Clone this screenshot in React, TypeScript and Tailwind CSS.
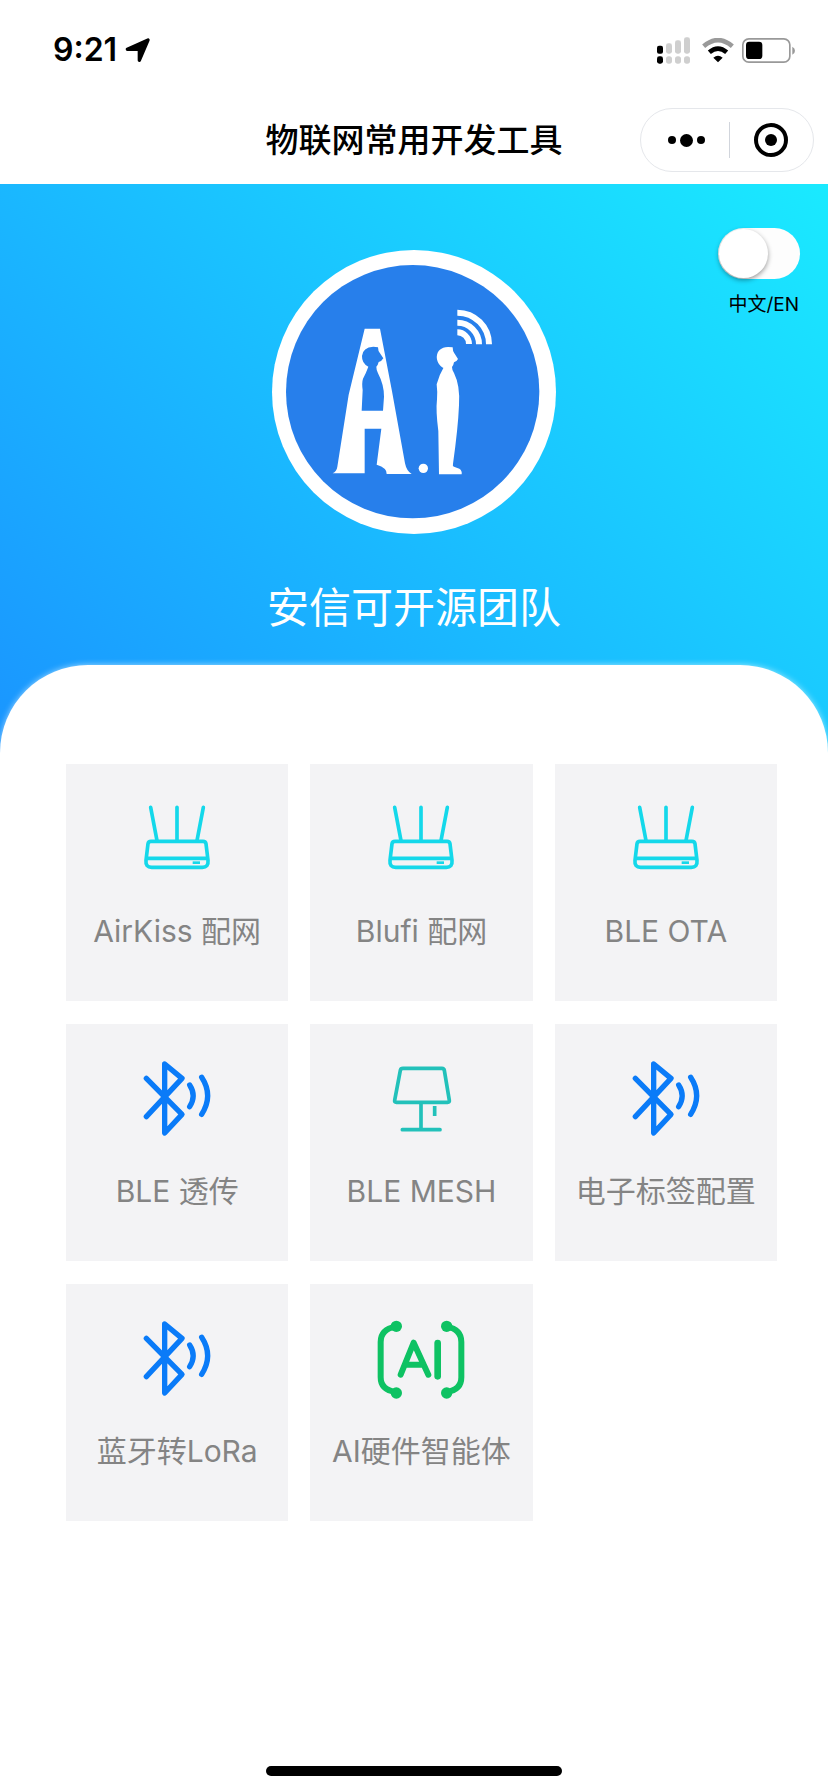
import React, { useState } from 'react'

const RouterIcon = () => (
    <svg viewBox="0 0 264 264" className="w-[88px] h-[88px]" fill="none" stroke="#14d8ea" strokeWidth="11" aria-hidden="true">
        <path d="M53 40l19 100M132 40v100M211 40l-19 100" strokeLinecap="round" />
        <path d="M54 142h156q8 0 9 7l6 50q2 21-17 21H56q-19 0-17-21l6-50q1-7 9-7z" />
        <path d="M41 193h183" />
        <path d="M179 206h22" strokeWidth="8" />
    </svg>
)

const BluetoothIcon = () => (
    <svg viewBox="0 0 264 264" className="w-[88px] h-[88px]" fill="none" stroke="#0a7bf8" strokeWidth="16" strokeLinecap="round" strokeLinejoin="round" aria-hidden="true">
        <path d="M40 73l107 108-52 56V30l52 43L40 188" />
        <path d="M170 93q21 32 0 65M206 70q36 55 0 111" />
    </svg>
)

const LampIcon = () => (
    <svg viewBox="0 0 264 264" className="w-[88px] h-[88px]" fill="none" stroke="#22c1ba" strokeWidth="11" aria-hidden="true">
        <path d="M78 43h117q6 0 7 6l15 90q1 6-5 6H58q-6 0-5-6l17-90q1-6 8-6z" />
        <path d="M132 145v80M173 156v30" />
        <path d="M76 227h113" strokeLinecap="round" />
    </svg>
)

const AgentIcon = () => (
    <svg viewBox="0 0 264 264" className="w-[88px] h-[88px]" fill="none" stroke="#0ec263" strokeWidth="18" strokeLinecap="round" strokeLinejoin="round" aria-hidden="true">
        <path d="M56 38Q11 46 11 84v106q0 38 45 44M209 38q44 8 44 46v106q0 38-44 44" />
        <g fill="#0ec263" stroke="none">
            <circle cx="58" cy="37" r="17" />
            <circle cx="58" cy="237" r="17" />
            <circle cx="209" cy="37" r="17" />
            <circle cx="209" cy="237" r="17" />
        </g>
        <path d="M71 182l39-96 44 96M86 152h54" />
        <path d="M182 87v100" strokeWidth="20" />
    </svg>
)

const menuList = [
    { id: 1, name: "AirKiss 配网", icon: <RouterIcon /> },
    { id: 2, name: "Blufi 配网", icon: <RouterIcon /> },
    { id: 3, name: "BLE OTA", icon: <RouterIcon /> },
    { id: 4, name: "BLE 透传", icon: <BluetoothIcon /> },
    { id: 5, name: "BLE MESH", icon: <LampIcon /> },
    { id: 6, name: "电子标签配置", icon: <BluetoothIcon /> },
    { id: 7, name: "蓝牙转LoRa", icon: <BluetoothIcon /> },
    { id: 8, name: "AI硬件智能体", icon: <AgentIcon /> },
]

const StatusBar = () => (
    <div className="flex items-center justify-between h-[100px] pl-[53px] pr-8">
        <div className="flex items-center gap-2">
            <span className="text-[32px] leading-10 font-semibold">9:21</span>
            <svg viewBox="0 0 75 75" className="w-[25px] h-[25px]" aria-hidden="true">
                <path d="M69 6L43 67V34H7z" fill="#000" stroke="#000" strokeWidth="10" strokeLinejoin="round" />
            </svg>
        </div>
        <div className="flex items-center">
            <svg viewBox="0 0 99 81" className="w-[33px] h-[27px]" fill="#cfcfcf" aria-hidden="true">
                <rect x="0" y="26" width="18" height="24" rx="6" fill="#000" />
                <rect x="27" y="19" width="18" height="31" rx="7" />
                <rect x="54" y="10" width="18" height="40" rx="7" />
                <rect x="81" y="1" width="18" height="49" rx="7" />
                <rect x="0" y="58" width="18" height="22" rx="7" fill="#000" />
                <rect x="27" y="58" width="18" height="22" rx="8" />
                <rect x="54" y="58" width="18" height="22" rx="8" />
                <rect x="81" y="58" width="18" height="22" rx="8" />
            </svg>
            <svg viewBox="0 0 96 75" className="w-8 h-[25px] ml-3" fill="none" strokeWidth="14" aria-hidden="true">
                <path d="M5 25q43-37 86 0" stroke="#9a9a9a" />
                <path d="M22 43q26-22 52 0" stroke="#000" />
                <path d="M34 59q14-12 28 0L48 73z" fill="#000" />
            </svg>
            <svg viewBox="0 0 162 75" className="w-[54px] h-[25px] ml-2" aria-hidden="true">
                <rect x="2.5" y="2.5" width="141" height="70" rx="18" fill="none" stroke="#999" strokeWidth="5" />
                <rect x="12" y="11" width="49" height="52" rx="10" />
                <path d="M151 26q8 4 8 12t-8 12z" fill="#999" />
            </svg>
        </div>
    </div>
)

const Navbar = () => (
    <nav className="grid grid-cols-[1fr_auto_1fr] items-center pt-2 pb-3 px-[14px]">
        <h1 className="col-start-2 text-[33px] leading-[50px] font-medium">物联网常用开发工具</h1>
        <div className="justify-self-end flex items-center w-[174px] h-16 rounded-full border border-gray-200">
            <button type="button" aria-label="更多" className="flex flex-1 items-center justify-center gap-1 h-full pl-1">
                <span className="w-2 h-2 rounded-full bg-black" />
                <span className="w-[13px] h-[13px] rounded-full bg-black" />
                <span className="w-2 h-2 rounded-full bg-black" />
            </button>
            <span className="w-px h-9 bg-gray-300" />
            <button type="button" aria-label="关闭" className="flex flex-1 items-center justify-center h-full">
                <span className="flex items-center justify-center w-[34px] h-[34px] rounded-full border-4 border-black">
                    <span className="w-3 h-3 rounded-full bg-black" />
                </span>
            </button>
        </div>
    </nav>
)

const Logo = () => (
    <svg viewBox="0 0 852 852" className="w-[284px] h-[284px]" role="img" aria-label="A.i">
        <circle cx="426" cy="426" r="426" fill="#fff" />
        <circle cx="422" cy="425" r="380" fill="#277feb" />
        <g fill="#fff">
            <path d="M278 236h46l36 188 39 216q5 24 20 32h-75q2-18-30-28l14-108h-50v134h-96q12-6 14-20l34-216z" />
            <path d="M516 355C486 340 485 292 528 291l14 1q0 12 5 18l11 17q-4 8-12 10-2 11-6 14 0 10 6 18 19 38 15 97-3 70-18 175-2 8 3 9l16 6q9 6 7 17h-68l-2-130q-8-60-4-95 2-20-1-45 8-30 22-53z" />
            <circle cx="454" cy="655" r="14" />
        </g>
        <path d="M289 350q-20-10-19-32 2-26 34-28l14 2q0 12 6 18l10 15q-4 8-14 11-3 12-7 14 0 10 5 20 18 34 18 70l-3 42h-64l3-62q-3-22 1-34 8-14 16-36z" fill="#277feb" />
        <g fill="none" stroke="#fff" strokeWidth="18">
            <path d="M556 247a35 35 0 0 1 35 35" />
            <path d="M556 218a65 65 0 0 1 65 65" />
            <path d="M556 188a95 95 0 0 1 95 95" />
        </g>
    </svg>
)

const App = () => {

    const [english, setEnglish] = useState(false)

    return (
        <div className="flex flex-col min-h-screen bg-white text-black font-['Inter','Noto_Sans_CJK_SC',sans-serif]">
            <StatusBar />
            <Navbar />
            <header className="relative flex flex-col items-center pt-[66px] pb-[127px] bg-[linear-gradient(45deg,#1a94ff,#1aeaff)]">
                <Logo />
                <p className="mt-11 text-[42px] leading-[60px] text-white">安信可开源团队</p>
                <div className="absolute top-11 right-7 flex flex-col items-end gap-3">
                    <input
                        id="lang"
                        type="checkbox"
                        role="switch"
                        checked={english}
                        onChange={() => setEnglish(!english)}
                        className="appearance-none w-[82px] h-[51px] p-px rounded-full bg-[#fdfdfd] cursor-pointer before:block before:w-[49px] before:h-[49px] before:rounded-full before:bg-white before:shadow-[0_2px_5px_rgba(0,0,0,0.4)] checked:before:ml-auto"
                    />
                    <label htmlFor="lang" className="pr-px text-[19px] leading-7">中文/EN</label>
                </div>
            </header>
            <main className="relative -mt-[100px] pt-[99px] pl-[66px] pr-[51px] rounded-t-[88px] bg-white shadow-[0_0_6px_rgba(255,255,255,0.6)]">
                <div className="grid grid-cols-3 gap-x-[22px] gap-y-[23px]">
                    {menuList.map(menu => (
                        <button key={menu.id} type="button" className="flex flex-col items-center pt-[30px] h-[237px] bg-[#f3f3f5] cursor-pointer">
                            {menu.icon}
                            <span className="mt-[29px] text-[30px] leading-10 text-[#848484]">{menu.name}</span>
                        </button>
                    ))}
                </div>
            </main>
            <footer className="flex justify-center mt-auto pt-6 pb-4">
                <div className="w-[296px] h-[10px] rounded-full bg-black" />
            </footer>
        </div>
    )
}

export default App
